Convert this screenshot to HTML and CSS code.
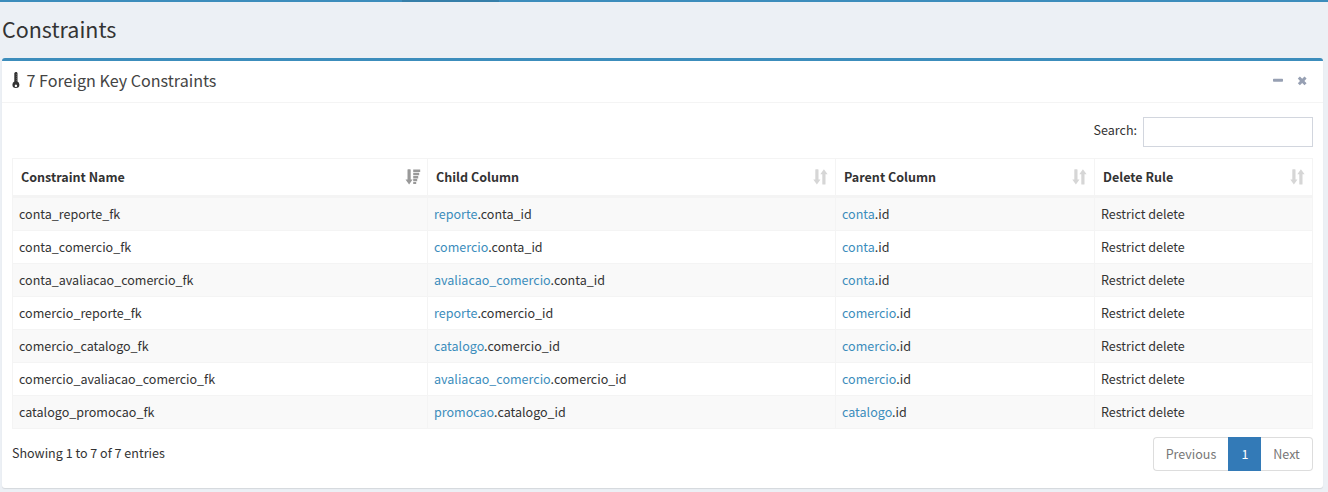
FILE: index.html
```html
<!DOCTYPE html>
<html lang="en">
<head>
<meta charset="utf-8">
<title>Constraints</title>
<link rel="stylesheet" href="styles.css">
</head>
<body>
<svg class="defs" width="0" height="0">
  <symbol id="sort" viewBox="0 0 16 16"><path d="M2.300 0.700q0-.5.5-.5h2.200q.5 0 .5.5v9.800h2L3.900 15.600 0.300 10.500h2zM9.300 15.100q0 .5.5.5h2.200q.5 0 .5-.5V5.300h2.100L10.900 0.200 7.300 5.300h2z"/></symbol>
  <symbol id="sort-desc" viewBox="0 0 16 16"><path d="M2.500 0.700q0-.5.5-.5h2.200q.5 0 .5.5v9.800h1.900L4.100 15.600 0.500 10.500h2zM8.200 0.400h7v2.600H8.200zM8.200 3.700h6v2.500H8.200zM8.200 6.900h5v2.500H8.200zM8.200 10.100h4v2.200H8.200zM8.200 12.900h3v2.100H8.200z"/></symbol>
</svg>
<div class="navbar"><div class="navbar-active"></div></div>
<header class="page-header"><h1>Constraints</h1></header>
<section class="box">
  <div class="box-header">
    <svg class="key" viewBox="0 0 9 18"><path fill-rule="evenodd" d="M2.300 2L3.500 1H4.700L5.500 2V10.600Q7.400 11.700 7.400 13.800Q7.400 17 3.900 17Q0.400 17 0.400 13.800Q0.400 11.700 2.300 10.600zM3.900 13.600a1.200 1.200 0 1 0 .01 0z"/><path class="groove" d="M4.700 3v8"/></svg>
    <h3>7 Foreign Key Constraints</h3>
    <div class="tools">
      <svg viewBox="0 0 12 12"><path d="M1.700 3.800h8.600q.7 0 .7.7v1.600q0 .7-.7.7H1.700Q1 6.800 1 6.100V4.500q0-.7.7-.7z"/></svg>
      <svg viewBox="0 0 12 12"><path d="M3.900 1.500L6.200 3.700 8.500 1.500 10.600 3.600 8.400 5.900 10.600 8.200 8.500 10.300 6.200 8.100 3.900 10.300 1.800 8.200 4 5.900 1.800 3.600z"/></svg>
    </div>
  </div>
  <div class="box-body">
    <label class="search"><span>Search:</span><input type="text"></label>
    <table>
      <colgroup><col class="c1"><col class="c2"><col class="c3"><col class="c4"></colgroup>
      <thead><tr>
        <th><div class="th"><span>Constraint Name</span><svg class="on"><use href="#sort-desc"/></svg></div></th>
        <th><div class="th"><span>Child Column</span><svg><use href="#sort"/></svg></div></th>
        <th><div class="th"><span>Parent Column</span><svg><use href="#sort"/></svg></div></th>
        <th><div class="th"><span>Delete Rule</span><svg><use href="#sort"/></svg></div></th>
      </tr></thead>
      <tbody>
        <tr><td>conta_reporte_fk</td><td><a>reporte</a>.conta_id</td><td><a>conta</a>.id</td><td>Restrict delete</td></tr>
        <tr><td>conta_comercio_fk</td><td><a>comercio</a>.conta_id</td><td><a>conta</a>.id</td><td>Restrict delete</td></tr>
        <tr><td>conta_avaliacao_comercio_fk</td><td><a>avaliacao_comercio</a>.conta_id</td><td><a>conta</a>.id</td><td>Restrict delete</td></tr>
        <tr><td>comercio_reporte_fk</td><td><a>reporte</a>.comercio_id</td><td><a>comercio</a>.id</td><td>Restrict delete</td></tr>
        <tr><td>comercio_catalogo_fk</td><td><a>catalogo</a>.comercio_id</td><td><a>comercio</a>.id</td><td>Restrict delete</td></tr>
        <tr><td>comercio_avaliacao_comercio_fk</td><td><a>avaliacao_comercio</a>.comercio_id</td><td><a>comercio</a>.id</td><td>Restrict delete</td></tr>
        <tr><td>catalogo_promocao_fk</td><td><a>promocao</a>.catalogo_id</td><td><a>catalogo</a>.id</td><td>Restrict delete</td></tr>
      </tbody>
    </table>
    <div class="footer">
      <div class="info">Showing 1 to 7 of 7 entries</div>
      <div class="pages"><span class="prev">Previous</span><span class="current">1</span><span class="next">Next</span></div>
    </div>
  </div>
</section>
</body>
</html>
```

FILE: styles.css
```css
* { box-sizing: border-box; }
body {
  margin: 0;
  height: 492px;
  overflow: hidden;
  background: #ecf0f5;
  color: #333;
  font: 12.54px/20px "Noto Sans CJK JP", "Noto Sans", sans-serif;
}
.defs { display: block; }
.navbar { height: 2px; background: #3c8dbc; padding-left: 402px; }
.navbar-active { width: 97px; height: 2px; background: #367fa9; }
.page-header { height: 56px; padding: 14px 2px 0; }
h1 { margin: 0; font-size: 21.5px; line-height: 26px; font-weight: 400; }
.box {
  width: 1321px;
  height: 430px;
  margin-left: 2px;
  background: #fff;
  border-top: 3px solid #3c8dbc;
  border-radius: 3px;
  box-shadow: 0 1px 1px rgba(0, 0, 0, .1);
}
.box-header {
  height: 42px;
  padding: 10px;
  display: flex;
  align-items: flex-start;
  border-bottom: 1px solid #f4f4f4;
  color: #444;
}
.key { width: 9px; height: 18px; margin-right: 5.5px; fill: #333; }
.groove { fill: none; stroke: #888; stroke-width: .6; stroke-dasharray: 1 1; }
h3 { margin: -1px 0 0; font-size: 16.12px; line-height: 20px; font-weight: 400; }
.tools { display: flex; gap: 12px; margin: 4px 5px 0 auto; }
.tools svg { width: 12px; height: 12px; fill: #97a0b3; }
.box-body { padding: 14px 10px 0; }
.search { display: flex; justify-content: flex-end; gap: 6px; height: 41px; }
.search span { line-height: 25px; }
.search input { width: 170px; height: 30px; border: 1px solid #d2d6de; background: #fff; padding: 5px 10px; }
table { width: 1301px; table-layout: fixed; border-collapse: separate; border-spacing: 0; }
.c1 { width: 416px; }
.c2 { width: 408px; }
.c3 { width: 259px; }
.c4 { width: 218px; }
th, td { text-align: left; padding: 0 6px; border-right: 1px solid #f4f4f4; }
th:first-child, td:first-child { border-left: 1px solid #f4f4f4; }
th { height: 40px; padding: 0 6px 0 8px; border-top: 1px solid #f4f4f4; border-bottom: 3px solid #f4f4f4; font-weight: 700; }
.th { display: flex; align-items: center; justify-content: space-between; }
.th svg { width: 16px; height: 16px; fill: #d6d6d6; }
.th .on { fill: #999; }
td { height: 33px; border-bottom: 1px solid #f4f4f4; }
tbody tr:nth-child(odd) { background: #f9f9f9; }
a { color: #3c8dbc; }
.footer { display: flex; justify-content: space-between; padding-top: 8px; }
.info { line-height: 31px; }
.pages { display: flex; width: 160px; height: 34px; line-height: 32px; color: #777; text-align: center; }
.pages span { border: 1px solid #ddd; }
.pages .prev { width: 75px; border-right: 0; border-radius: 4px 0 0 4px; }
.pages .current { width: 33px; padding-left: 1px; background: #337ab7; border-color: #337ab7; color: #fff; }
.pages .next { width: 52px; border-left: 0; border-radius: 0 4px 4px 0; }
```
